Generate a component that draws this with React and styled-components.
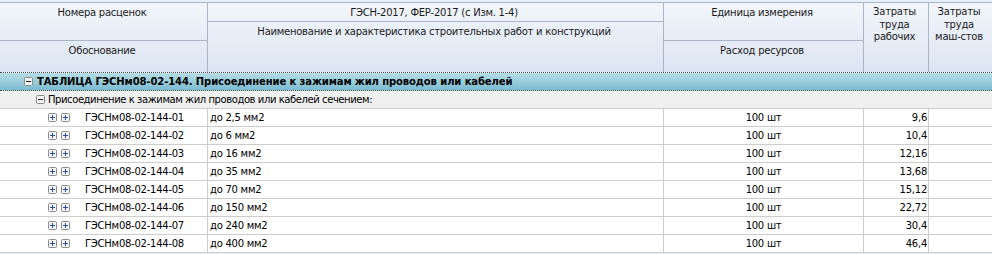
import styled, { createGlobalStyle } from 'styled-components'

const GlobalStyle = createGlobalStyle`
  * { box-sizing: border-box; }
  body {
    margin: 0;
    background: #fff;
    font-family: 'DejaVu Sans', sans-serif;
    font-size: 10px;
    letter-spacing: -0.25px;
    color: #000;
  }
`

const COLS = '208px 456px 200px 65px 1fr'
const HEAD_LINE = '#aab5c9'
const GRID_LINE = '#cdcdcd'

const Sheet = styled.div`
  width: 992px;
  height: 254px;
  overflow: hidden;
  padding-top: 2px;
  background: #e9eff8;
`

const Header = styled.div`
  display: grid;
  grid-template-columns: ${COLS};
  grid-template-rows: 19px 19px 31px;
  border-top: 1px solid ${HEAD_LINE};
  border-bottom: 1px dotted #4a4a4a;
  background: linear-gradient(#f2f6fc, #dce5f2);
  color: #1a1a1a;
`

const HeadCell = styled.div`
  grid-column: ${p => p.$col};
  grid-row: ${p => p.$row};
  border-right: ${p => (p.$edge ? 'none' : `1px solid ${HEAD_LINE}`)};
  border-bottom: ${p => (p.$bottom ? `1px solid ${HEAD_LINE}` : 'none')};
  text-align: center;
  padding: 3px 4px 0 1px;
  line-height: ${p => (p.$tight ? '12.5px' : '13px')};
`

const Body = styled.div`
  background: #fff;
`

const TableRow = styled.div`
  display: flex;
  align-items: center;
  gap: 4px;
  height: 18px;
  padding-left: 24px;
  border-bottom: 1px dotted #4a4a4a;
  background: linear-gradient(#b6dde5, #7cbcd1);
  font-weight: bold;
  letter-spacing: -0.1px;
`

const SectionRow = styled.div`
  display: flex;
  align-items: center;
  gap: 3px;
  height: 18px;
  padding-left: 36px;
  border-bottom: 1px solid ${GRID_LINE};
  background: #f0f0f0;
  letter-spacing: -0.42px;
`

const DataRow = styled.div`
  display: grid;
  grid-template-columns: ${COLS};
  height: 18px;
  border-bottom: 1px solid ${GRID_LINE};
  line-height: 17px;
`

const Cell = styled.div`
  border-right: ${p => (p.$edge ? 'none' : `1px solid ${GRID_LINE}`)};
  text-align: ${p => p.$align || 'left'};
  padding: ${p => p.$pad || '0 2px'};
  white-space: nowrap;
  overflow: hidden;
`

const CodeCell = styled(Cell)`
  display: flex;
  align-items: center;
  padding-left: 48px;
`

const Icons = styled.span`
  display: flex;
  gap: 4px;
  margin-right: 15px;
`

const ToggleBox = ({ open }) => (
  <svg width="9" height="9" viewBox="0 0 9 9" style={{ display: 'block', flex: 'none' }}>
    <rect x="0.5" y="0.5" width="8" height="8" rx="1" fill="#f4f4f4" stroke="#8a8a8a" />
    <path d="M2 4.5h5" stroke={open ? '#222' : '#2b4ea3'} strokeWidth="1" />
    {!open && <path d="M4.5 2v5" stroke="#2b4ea3" strokeWidth="1" />}
  </svg>
)

const rows = [
  ['01', 'до 2,5 мм2', '9,6'],
  ['02', 'до 6 мм2', '10,4'],
  ['03', 'до 16 мм2', '12,16'],
  ['04', 'до 35 мм2', '13,68'],
  ['05', 'до 70 мм2', '15,12'],
  ['06', 'до 150 мм2', '22,72'],
  ['07', 'до 240 мм2', '30,4'],
  ['08', 'до 400 мм2', '46,4'],
]

const App = () => {
  return (
    <Sheet>
      <GlobalStyle />
      <Header>
        <HeadCell $col="1" $row="1 / 3" $bottom>Номера расценок</HeadCell>
        <HeadCell $col="1" $row="3">Обоснование</HeadCell>
        <HeadCell $col="2" $row="1" $bottom>ГЭСН-2017, ФЕР-2017 (с Изм. 1-4)</HeadCell>
        <HeadCell $col="2" $row="2 / 4">Наименование и характеристика строительных работ и конструкций</HeadCell>
        <HeadCell $col="3" $row="1 / 3" $bottom>Единица измерения</HeadCell>
        <HeadCell $col="3" $row="3">Расход ресурсов</HeadCell>
        <HeadCell $col="4" $row="1 / 4" $tight>Затраты<br />труда<br />рабочих</HeadCell>
        <HeadCell $col="5" $row="1 / 4" $tight $edge>Затраты<br />труда<br />маш-стов</HeadCell>
      </Header>
      <Body>
        <TableRow>
          <ToggleBox open />
          ТАБЛИЦА ГЭСНм08-02-144. Присоединение к зажимам жил проводов или кабелей
        </TableRow>
        <SectionRow>
          <ToggleBox open />
          Присоединение к зажимам жил проводов или кабелей сечением:
        </SectionRow>
        {rows.map(([n, name, labor]) => (
          <DataRow key={n}>
            <CodeCell>
              <Icons>
                <ToggleBox />
                <ToggleBox />
              </Icons>
              ГЭСНм08-02-144-{n}
            </CodeCell>
            <Cell>{name}</Cell>
            <Cell $align="center">100 шт</Cell>
            <Cell $align="right" $pad="0 1px 0 0">{labor}</Cell>
            <Cell $edge />
          </DataRow>
        ))}
      </Body>
    </Sheet>
  )
}

export default App
